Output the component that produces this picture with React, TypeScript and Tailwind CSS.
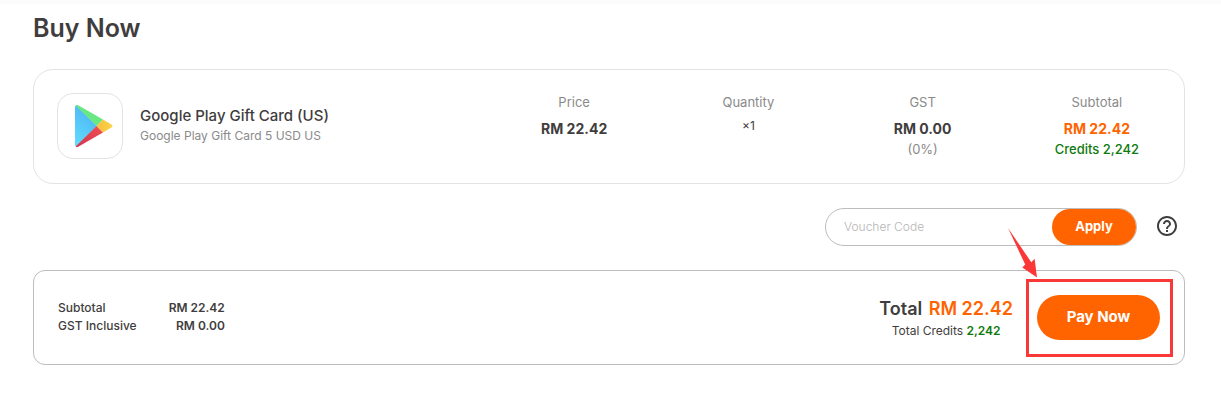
import type { ReactNode } from "react";
import { clsx } from "clsx";

type OrderColumnProps = {
  label: string;
  children: ReactNode;
};

function PlayLogo() {
  return (
    <svg viewBox="0 0 40 44" className="ml-2 h-11 w-10" aria-hidden="true">
      <defs>
        <linearGradient id="play-blue" x1="0.6" y1="0" x2="0.2" y2="1">
          <stop offset="0" stopColor="#4db3f5" />
          <stop offset="1" stopColor="#5fdcfb" />
        </linearGradient>
        <linearGradient id="play-red" x1="1" y1="0" x2="0" y2="1">
          <stop offset="0" stopColor="#f04e50" />
          <stop offset="1" stopColor="#cf3853" />
        </linearGradient>
        <linearGradient id="play-yellow" x1="0" y1="0" x2="1" y2="0">
          <stop offset="0" stopColor="#f4bd3f" />
          <stop offset="1" stopColor="#fbd549" />
        </linearGradient>
      </defs>
      <path d="M1 2.4 2 1.4 23 22 2 42.6 1 41.6Z" fill="url(#play-blue)" />
      <path d="M1.6 1.6C2.4.7 3.3.8 4.2 1.3L29 15.6 22.6 22Z" fill="#68e783" />
      <path d="M1.6 42.4C2.4 43.3 3.3 43.2 4.2 42.7L29 28.4 22.6 22Z" fill="url(#play-red)" />
      <path d="M29 15.6 37.4 20.5C38.9 21.4 38.9 22.6 37.4 23.5L29 28.4 22.6 22Z" fill="url(#play-yellow)" />
    </svg>
  );
}

function HelpIcon() {
  return (
    <svg viewBox="0 0 24 24" className="size-6" fill="#3f3d3d" aria-hidden="true">
      <path d="M11 18h2v-2h-2v2zm1-16C6.48 2 2 6.48 2 12s4.48 10 10 10 10-4.48 10-10S17.52 2 12 2zm0 18c-4.41 0-8-3.59-8-8s3.59-8 8-8 8 3.59 8 8-3.59 8-8 8zm0-14c-2.21 0-4 1.79-4 4h2c0-1.1.9-2 2-2s2 .9 2 2c0 2-3 1.75-3 5h2c0-2.25 3-2.5 3-5 0-2.21-1.79-4-4-4z" />
    </svg>
  );
}

function OrderColumn({ label, children }: OrderColumnProps) {
  return (
    <dl className="pt-[22px] text-center text-[13px] leading-5">
      <dt className="mb-1 text-[#8a8a8a]">{label}</dt>
      {children}
    </dl>
  );
}

function Amount({ value, highlight }: { value: string; highlight?: boolean }) {
  return (
    <dd
      className={clsx(
        "pt-[3px] text-[14px] leading-5 font-bold",
        highlight ? "text-[#ff6400]" : "text-[#3f3d3d]",
      )}
    >
      {value}
    </dd>
  );
}

function OrderItem() {
  return (
    <section className="grid min-h-[115px] grid-cols-[2.6fr_1fr_1fr_1fr_1fr] rounded-[20px] border border-[#e3e3e3]">
      <div className="flex items-center gap-[17px] pb-px pl-[23px]">
        <div className="flex size-[66px] shrink-0 items-center justify-center rounded-2xl border border-[#e3e3e3]">
          <PlayLogo />
        </div>
        <div>
          <h2 className="text-[15px] leading-5 font-medium text-[#3f3d3d]">Google Play Gift Card (US)</h2>
          <p className="text-[12px] leading-5 text-[#8a8a8a]">Google Play Gift Card 5 USD US</p>
        </div>
      </div>
      <OrderColumn label="Price">
        <Amount value="RM 22.42" />
      </OrderColumn>
      <OrderColumn label="Quantity">
        <dd className="text-[12px] text-[#3f3d3d]">×1</dd>
      </OrderColumn>
      <OrderColumn label="GST">
        <Amount value="RM 0.00" />
        <dd className="text-[#8a8a8a]">(0%)</dd>
      </OrderColumn>
      <OrderColumn label="Subtotal">
        <Amount value="RM 22.42" highlight />
        <dd className="font-medium text-[#0d7a0d]">Credits 2,242</dd>
      </OrderColumn>
    </section>
  );
}

function VoucherForm() {
  return (
    <form className="mt-6 flex items-center justify-end gap-[18px] pr-[6px]" onSubmit={(e) => e.preventDefault()}>
      <div className="flex h-[38px] w-[312px] rounded-full border border-[#bdbdbd]">
        <input
          type="text"
          aria-label="Voucher Code"
          placeholder="Voucher Code"
          className="min-w-0 flex-1 bg-transparent pl-[18px] text-[12px] font-light text-[#3f3d3d] outline-none placeholder:text-[#b5b5b5]"
        />
        <button type="submit" className="w-[84px] rounded-full bg-[#ff6400] text-[13px] font-bold text-white">
          Apply
        </button>
      </div>
      <button type="button" aria-label="Voucher help" className="pb-0.5">
        <HelpIcon />
      </button>
    </form>
  );
}

function PayAction() {
  return (
    <div className="relative">
      <button type="button" className="h-[45px] w-[123px] rounded-full bg-[#ff6400] text-[15px] font-bold text-white">
        Pay Now
      </button>
      <div className="pointer-events-none absolute -top-4 -right-[13px] -bottom-[17px] -left-[11px] border-3 border-[#fb3838]" />
      <svg
        viewBox="0 0 32 52"
        className="pointer-events-none absolute -top-[68px] -left-[30px] h-[52px] w-8"
        fill="#fb3838"
        aria-hidden="true"
      >
        <path d="M1 1 24.3 35.3 27.6 31.8 30 50.5 15.3 40.5 18.2 37.5Z" />
      </svg>
    </div>
  );
}

function OrderSummary() {
  return (
    <section className="mt-6 flex min-h-[95px] items-center justify-between rounded-xl border border-[#bdbdbd] pr-6 pl-6 text-[#3f3d3d]">
      <table className="mb-0.5 text-[12px] leading-[18px]">
        <tbody>
          <tr>
            <th scope="row" className="pr-8 text-left font-medium">Subtotal</th>
            <td className="text-right font-semibold">RM 22.42</td>
          </tr>
          <tr>
            <th scope="row" className="pr-8 text-left font-medium">GST Inclusive</th>
            <td className="text-right font-semibold">RM 0.00</td>
          </tr>
        </tbody>
      </table>
      <div className="flex items-center gap-6">
        <div className="pt-0.5 text-center">
          <p className="text-[18px] leading-6 font-semibold">
            Total <span className="ml-0.5 font-semibold text-[#ff6400]">RM 22.42</span>
          </p>
          <p className="text-[12px] leading-5">
            Total Credits <span className="font-semibold text-[#0d7a0d]">2,242</span>
          </p>
        </div>
        <PayAction />
      </div>
    </section>
  );
}

export default function App() {
  return (
    <div className="bg-white font-['Inter',sans-serif]">
      <div className="h-1 bg-[#fcfcfc]" />
      <main className="pr-9 pb-11 pl-[33px]">
        <h1 className="pt-2 pb-[25px] text-[25px] leading-8 font-semibold text-[#3f3d3d]">Buy Now</h1>
        <OrderItem />
        <VoucherForm />
        <OrderSummary />
      </main>
    </div>
  );
}
